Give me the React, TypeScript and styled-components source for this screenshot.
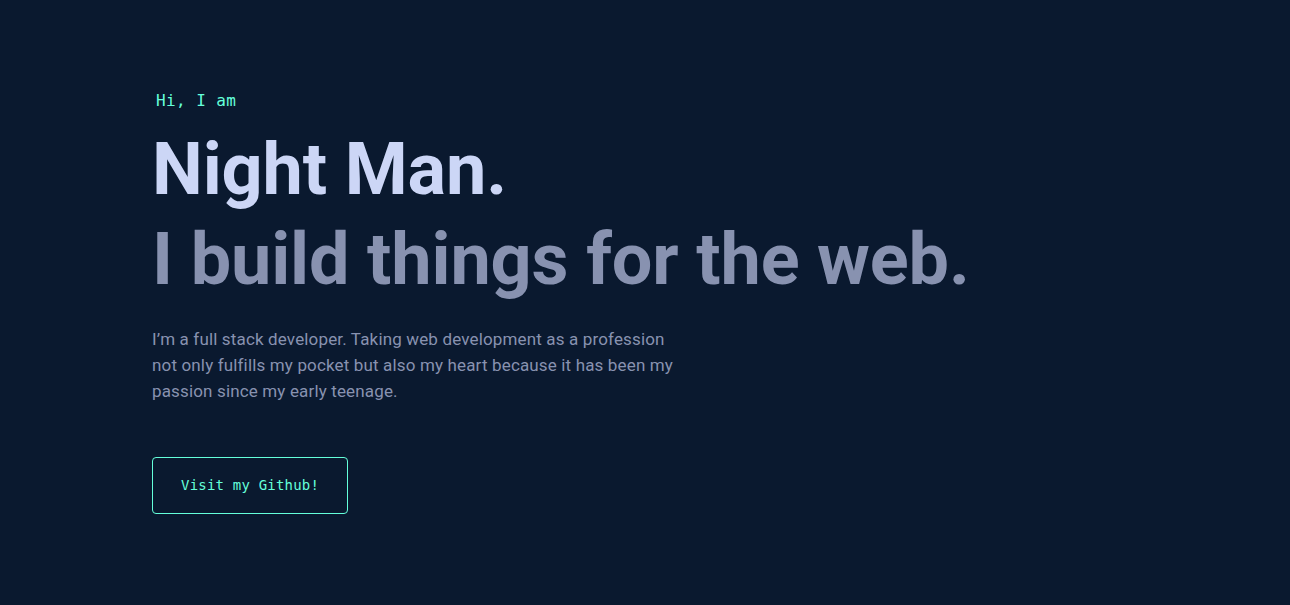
import React from 'react';
import styled, { createGlobalStyle } from 'styled-components';

const GlobalStyle = createGlobalStyle`
  html, body {
    margin: 0;
    padding: 0;
    background-color: #0a192f;
  }
  * {
    box-sizing: border-box;
  }
`;

const Page = styled.main`
  min-height: 605px;
  background-color: #0a192f;
  padding: 0 152px;
`;

const Hero = styled.section`
  display: flex;
  flex-direction: column;
  align-items: flex-start;
  padding-top: 92px;
`;

const Greeting = styled.h1`
  margin: 0 0 15px 4px;
  color: #64ffda;
  font-family: 'DejaVu Sans Mono', monospace;
  font-size: 16px;
  font-weight: 400;
  line-height: 1.1;
  letter-spacing: 0.4px;
`;

const BigHeading = styled.h2<{ $muted?: boolean }>`
  margin: 0;
  color: ${p => (p.$muted ? '#8892b0' : '#ccd6f6')};
  font-family: Roboto, 'Noto Sans', sans-serif;
  font-size: 72px;
  font-weight: 700;
  line-height: 90px;
  letter-spacing: -0.15px;
`;

const Intro = styled.p`
  margin: 21px 0 0;
  max-width: 530px;
  color: #8892b0;
  font-family: Roboto, 'Noto Sans', sans-serif;
  font-size: 17px;
  line-height: 26px;
  letter-spacing: 0.15px;
`;

const GithubButton = styled.a`
  margin-top: 53px;
  padding: 20px 28px;
  border: 1px solid #64ffda;
  border-radius: 4px;
  color: #64ffda;
  font-family: 'DejaVu Sans Mono', monospace;
  font-size: 14px;
  line-height: 15px;
  letter-spacing: 0.2px;
  text-decoration: none;
  cursor: pointer;
  transition: 0.25s ease all;

  &:hover {
    background-color: rgba(100, 255, 218, 0.1);
  }
`;

export default function App() {
  return (
    <>
      <GlobalStyle />
      <Page>
        <Hero>
          <Greeting>Hi, I am</Greeting>
          <BigHeading>Night Man.</BigHeading>
          <BigHeading $muted>I build things for the web.</BigHeading>
          <Intro>
            I’m a full stack developer. Taking web development as a profession not only fulfills my pocket but
            also my heart because it has been my passion since my early teenage.
          </Intro>
          <GithubButton href="#">Visit my Github!</GithubButton>
        </Hero>
      </Page>
    </>
  );
}
